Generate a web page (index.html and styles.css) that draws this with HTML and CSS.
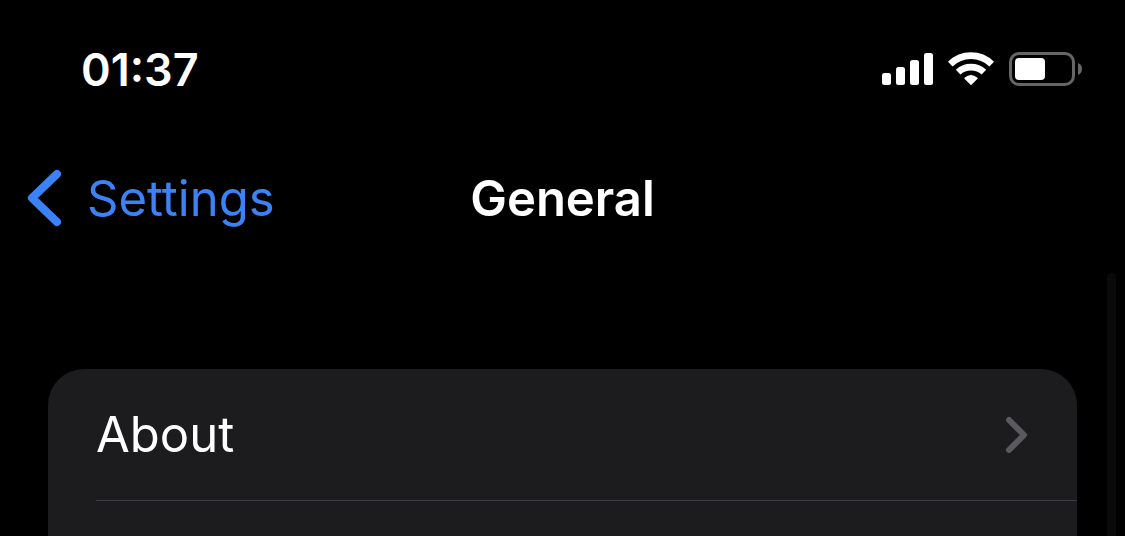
FILE: index.html
```html
<!DOCTYPE html>
<html lang="en">
<head>
  <meta charset="UTF-8">
  <meta name="viewport" content="width=device-width, initial-scale=1.0">
  <title>General</title>
  <link rel="stylesheet" href="styles.css">
</head>
<body>
  <!-- Status bar -->
  <div class="status-bar">
    <time class="clock">01:37</time>
    <div class="status-icons">
      <svg width="51" height="34" viewBox="0 0 51 34" fill="#fff" aria-hidden="true">
        <rect x="0" y="21" width="9" height="12" rx="2.5"/>
        <rect x="14" y="15" width="9" height="18" rx="2.5"/>
        <rect x="28" y="8" width="9" height="25" rx="2.5"/>
        <rect x="42" y="1" width="9" height="32" rx="2.5"/>
      </svg>
      <svg width="46" height="34" viewBox="0 0 46 34" fill="none" stroke="#fff" stroke-width="6.6" aria-hidden="true">
        <path d="M2.3 12.1A29.6 29.6 0 0 1 43.7 12.1"/>
        <path d="M10.1 20.2A19 19 0 0 1 35.9 20.2"/>
        <path d="M23 32.3L17 26.3Q23 21.3 29 26.3Z" fill="#fff" stroke-width="1.4" stroke-linejoin="round"/>
      </svg>
      <svg width="74" height="34" viewBox="0 0 74 34" aria-hidden="true">
        <rect x="1.5" y="1.5" width="63" height="31" rx="8.5" fill="none" stroke="#666" stroke-width="3"/>
        <rect x="6" y="6" width="30" height="22" rx="4" fill="#fff"/>
        <path d="M69 11Q73 12.5 73 17T69 23Z" fill="#666"/>
      </svg>
    </div>
  </div>

  <!-- Navigation -->
  <header class="nav-bar">
    <a class="back-link" href="#">
      <svg width="34" height="58" viewBox="0 0 34 58" aria-hidden="true">
        <path d="M30 5L5 29L30 53" fill="none" stroke="#3b82f7" stroke-width="8" stroke-linecap="round" stroke-linejoin="round"/>
      </svg>
      <span>Settings</span>
    </a>
    <h1 class="title">General</h1>
  </header>

  <!-- Settings list -->
  <main class="group">
    <a class="row" href="#">
      <span>About</span>
      <svg width="24" height="38" viewBox="0 0 24 38" aria-hidden="true">
        <path d="M4 4L19 19L4 34" fill="none" stroke="#5a5a5e" stroke-width="6" stroke-linecap="round" stroke-linejoin="round"/>
      </svg>
    </a>
  </main>

  <div class="scrollbar"></div>
</body>
</html>
```

FILE: styles.css
```css
* {
  box-sizing: border-box;
}

body {
  display: flex;
  flex-direction: column;
  min-height: 100vh;
  margin: 0;
  background-color: #000;
  color: #fff;
  font-family: Inter, "Liberation Sans", sans-serif;
}

a {
  color: inherit;
  text-decoration: none;
}

svg {
  display: block;
  flex-shrink: 0;
}

/* Status bar */
.status-bar {
  display: flex;
  align-items: center;
  justify-content: space-between;
  height: 138px;
  padding: 0 42px 0 81px;
}

.clock {
  font-size: 45px;
  font-weight: 600;
}

.status-icons {
  display: flex;
  gap: 15px;
}

/* Navigation */
.nav-bar {
  display: grid;
  grid-template-columns: 1fr auto 1fr;
  align-items: center;
  height: 120px;
  padding: 0 27px;
}

.back-link {
  display: flex;
  align-items: center;
  gap: 26px;
  color: #3b82f7;
  font-size: 49px;
}

.title {
  margin: 0;
  font-size: 49px;
  font-weight: 600;
}

/* Settings list */
.group {
  flex: 1;
  margin: 111px 48px 0;
  background-color: #1c1c1e;
  border-radius: 36px 36px 0 0;
}

.row {
  display: flex;
  align-items: center;
  justify-content: space-between;
  height: 132px;
  margin-left: 48px;
  padding-right: 48px;
  border-bottom: 1px solid #3d3d41;
  font-size: 49px;
}

.scrollbar {
  position: absolute;
  top: 273px;
  right: 9px;
  bottom: 0;
  width: 9px;
  background-color: #0a0a0a;
  border-radius: 5px 5px 0 0;
}
```
